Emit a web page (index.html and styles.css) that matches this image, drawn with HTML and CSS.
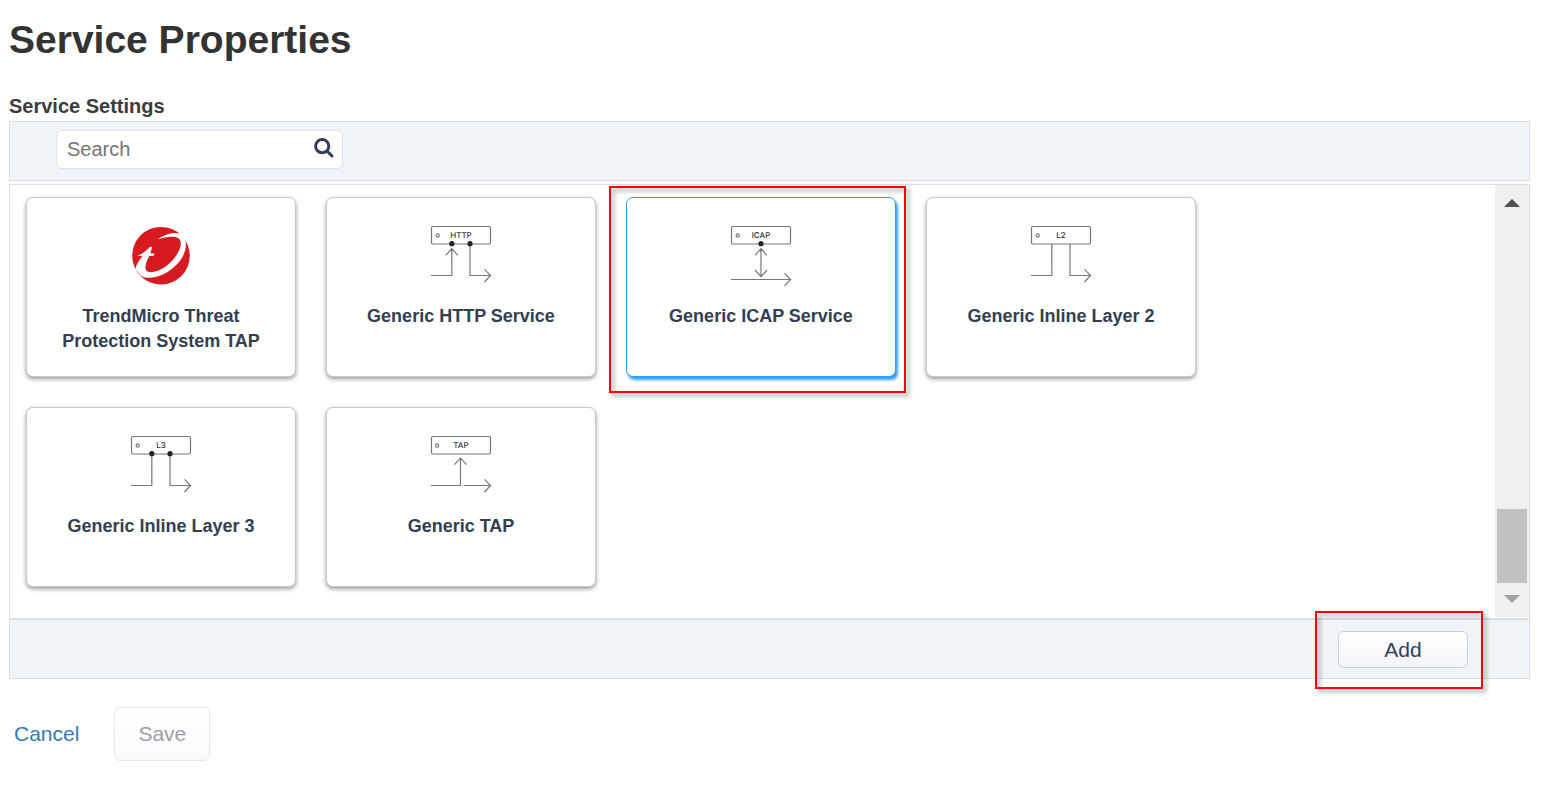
FILE: index.html
```html
<!DOCTYPE html>
<html lang="en">
<head>
<meta charset="utf-8">
<title>Service Properties</title>
<link rel="stylesheet" href="styles.css">
</head>
<body>
<main class="page">
  <h1 class="title">Service Properties</h1>
  <h2 class="subtitle">Service Settings</h2>

  <div class="toolbar">
    <div class="search">
      <input class="search-input" type="text" placeholder="Search" aria-label="Search">
      <svg class="search-icon" viewBox="0 0 20 20" aria-hidden="true"><circle cx="8.2" cy="8.2" r="6.6"/><path d="M13 13l5 5"/></svg>
    </div>
  </div>

  <div class="catalog">
    <div class="cards">
      <button class="card" type="button">
        <svg class="icon" viewBox="0 0 60 60" aria-hidden="true">
          <circle cx="30" cy="29.7" r="28.8" fill="#d71920"/>
          <path fill="#fff" d="M27 13.4C33 8.400 43 5.600 49 7.600L54 12C56.600 20 54 29.500 46.500 37.800C38.500 46.400 28 51.600 18 51.800C14.500 51.800 11.500 51 9.500 49.200L4.500 43.500C4.600 38.500 8.500 34.500 11.400 29.900L6.300 29.800C11 28 16 24.500 18.600 21L21.300 20.800L19.400 27.400L23.400 27.400L22.800 29.700L18.400 29.900C14.800 36 13 42.500 15.900 45.100C19 47.600 26.500 46 33 41.600C42 35.500 50 25.500 49.800 16.500C49.400 9.800 39 9.400 27 13.400Z"/>
        </svg>
        <span class="name">TrendMicro Threat Protection System TAP</span>
      </button>

      <button class="card" type="button">
        <svg class="icon" viewBox="0 0 60 60" aria-hidden="true">
          <g class="line"><rect x=".5" y=".5" width="59" height="17.500" rx="1.500"/><circle cx="6.700" cy="9.500" r="1.600"/><path d="M0 49.500H20.800V23M14.800 29.300L20.800 22.700L26.800 29.300M39 18V49.500H59.500M53.500 43.300L59.600 49.500L53.500 56"/></g>
          <circle cx="20.800" cy="17.700" r="2.600"/><circle cx="39" cy="17.700" r="2.600"/>
          <text class="tag" x="30" y="12.200">HTTP</text>
        </svg>
        <span class="name">Generic HTTP Service</span>
      </button>

      <button class="card selected" type="button">
        <svg class="icon" viewBox="0 0 60 60" aria-hidden="true">
          <g class="line"><rect x=".5" y=".5" width="59" height="17.500" rx="1.500"/><circle cx="6.700" cy="9.500" r="1.600"/><path d="M30 23V50.500M24 29.300L30 22.700L36 29.300M24 44L30 50.600L36 44M0 53.500H59.500M53.500 47.200L59.600 53.500L53.500 59.800"/></g>
          <circle cx="30" cy="17.700" r="2.600"/>
          <text class="tag" x="30" y="12.200">ICAP</text>
        </svg>
        <span class="name">Generic ICAP Service</span>
        <span class="callout callout-card"></span>
      </button>

      <button class="card" type="button">
        <svg class="icon" viewBox="0 0 60 60" aria-hidden="true">
          <g class="line"><rect x=".5" y=".5" width="59" height="17.500" rx="1.500"/><circle cx="6.700" cy="9.500" r="1.600"/><path d="M0 49.500H20.800V18M39 18V49.500H59.500M53.500 43.300L59.600 49.500L53.500 56"/></g>
          <text class="tag" x="30" y="12.200">L2</text>
        </svg>
        <span class="name">Generic Inline Layer 2</span>
      </button>

      <button class="card" type="button">
        <svg class="icon" viewBox="0 0 60 60" aria-hidden="true">
          <g class="line"><rect x=".5" y=".5" width="59" height="17.500" rx="1.500"/><circle cx="6.700" cy="9.500" r="1.600"/><path d="M0 49.500H20.800V18M39 18V49.500H59.500M53.500 43.300L59.600 49.500L53.500 56"/></g>
          <circle cx="20.800" cy="17.700" r="2.600"/><circle cx="39" cy="17.700" r="2.600"/>
          <text class="tag" x="30" y="12.200">L3</text>
        </svg>
        <span class="name">Generic Inline Layer 3</span>
      </button>

      <button class="card" type="button">
        <svg class="icon" viewBox="0 0 60 60" aria-hidden="true">
          <g class="line"><rect x=".5" y=".5" width="59" height="17.500" rx="1.500"/><circle cx="6.100" cy="9.500" r="1.600"/><path d="M0 49.500H29.500V22.500M23.500 28.700L29.500 22.200L35.500 28.700M32.600 49.500H59.500M53.500 43.300L59.600 49.500L53.500 56"/></g>
          <text class="tag" x="30" y="12.200">TAP</text>
        </svg>
        <span class="name">Generic TAP</span>
      </button>
    </div>

    <div class="scrollbar" aria-hidden="true">
      <svg class="arrow arrow-up" viewBox="0 0 16 8"><path d="M0 8L8 0L16 8Z"/></svg>
      <div class="track"><div class="thumb"></div></div>
      <svg class="arrow arrow-down" viewBox="0 0 16 8"><path d="M0 0L8 8L16 0Z"/></svg>
    </div>
  </div>

  <div class="footer">
    <div class="add-wrap">
      <button class="btn add" type="button">Add</button>
      <span class="callout callout-add"></span>
    </div>
  </div>

  <div class="actions">
    <a class="cancel" href="#">Cancel</a>
    <button class="btn save" type="button" disabled>Save</button>
  </div>
</main>
</body>
</html>
```

FILE: styles.css
```css
* { box-sizing: border-box; }

body {
  margin: 0;
  background: #fff;
  color: #333;
  font-family: "Liberation Sans", Arial, sans-serif;
}

button, input { font-family: inherit; }

.page { padding: 16px 27px 24px 9px; }

.title {
  margin: 0 0 28px;
  font-size: 39px;
  line-height: 48px;
}

.subtitle {
  margin: 0;
  padding: 2px 0 3px;
  color: #3c3c3c;
  font-size: 20px;
  line-height: 24px;
}

.toolbar {
  padding: 8px 46px 11px;
  border: 1px solid #dcdfe8;
  background: #f0f4f9;
}

.search {
  position: relative;
  width: 287px;
}

.search-input {
  display: block;
  width: 100%;
  height: 39px;
  padding: 0 40px 0 10px;
  border: 1px solid #dfe2ea;
  border-radius: 6px;
  background: #fff;
  color: #333;
  font-size: 20px;
}

.search-input::placeholder { color: #757575; }

.search-icon {
  position: absolute;
  top: 8px;
  right: 9px;
  width: 20px;
  height: 20px;
  fill: none;
  stroke: #333f55;
  stroke-width: 3;
  stroke-linecap: round;
}

.catalog {
  display: flex;
  margin-top: 3px;
  border: 1px solid #dcdfe8;
  padding-bottom: 1px;
}

.cards {
  flex: 1;
  display: grid;
  grid-template-columns: repeat(auto-fill, 270px);
  gap: 30px;
  padding: 12px 16px 30px;
}

.card {
  position: relative;
  display: flex;
  flex-direction: column;
  align-items: center;
  gap: 18px;
  min-height: 180px;
  padding: 28px 24px 20px;
  border: 1px solid #c8c8c8;
  border-radius: 7px;
  background: #fff;
  box-shadow: 0 2px 4px rgba(0, 0, 0, .4);
  color: #333f50;
}

.selected {
  border-color: #2f9ff8;
  box-shadow: 2px 3px 3px #2f9ff8;
}

.icon {
  width: 60px;
  height: 60px;
  overflow: visible;
  fill: #222;
}

.line {
  fill: none;
  stroke: #777;
  stroke-width: 1.2;
}

.tag {
  font-family: Inter, sans-serif;
  font-size: 8px;
  font-weight: 500;
  text-anchor: middle;
  text-rendering: geometricPrecision;
  fill: #333;
}

.name {
  font-size: 18px;
  font-weight: bold;
  line-height: 25px;
}

.scrollbar {
  display: flex;
  flex-direction: column;
  align-items: center;
  width: 34px;
  padding: 14px 2px;
  background: #f0f0f0;
}

.arrow { width: 16px; height: 8px; }
.arrow-up { fill: #505050; }
.arrow-down { fill: #a3a3a3; }

.track {
  flex: 1;
  display: flex;
  align-items: flex-end;
  align-self: stretch;
  padding: 12px 0;
}

.thumb {
  width: 100%;
  height: 74px;
  background: #c1c1c1;
}

.footer {
  display: flex;
  justify-content: flex-end;
  padding: 11px 61px 10px;
  border: 1px solid #dcdfe8;
  background: #f0f4f9;
}

.add-wrap { position: relative; }

.btn {
  display: block;
  border: 1px solid #ccd0da;
  border-radius: 6px;
  background: linear-gradient(#fff, #f2f4f8);
  color: #333f55;
  font-size: 21px;
}

.add {
  width: 130px;
  height: 37px;
  padding: 0;
}

.callout {
  position: absolute;
  border: 2px solid #f00;
  filter: drop-shadow(3px 3px 2px rgba(0, 0, 0, .4));
  pointer-events: none;
}

.callout-card { inset: -12px -11px -17px -18px; }
.callout-add { inset: -20px -15px -21px -23px; }

.actions {
  display: flex;
  align-items: center;
  gap: 35px;
  padding: 28px 5px 0;
}

.cancel {
  color: #337ab7;
  font-size: 21px;
  text-decoration: none;
}

.save {
  height: 54px;
  padding: 0 23px;
  border-color: #e6e8ee;
  background: linear-gradient(#fff, #f8f9fb);
  color: #9b9fa9;
}
```
